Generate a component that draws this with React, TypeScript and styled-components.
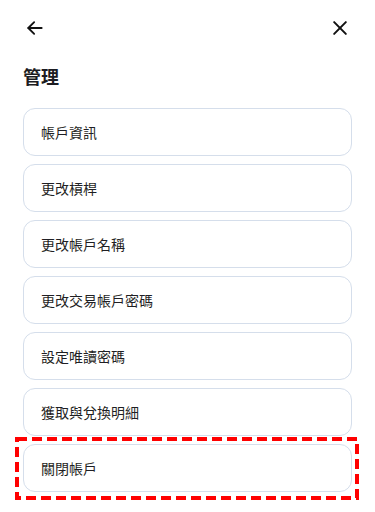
import React from "react";
import styled, { createGlobalStyle } from "styled-components";

const GlobalStyle = createGlobalStyle`
  html, body {
    margin: 0;
    padding: 0;
    background: #ffffff;
  }
  body {
    font-family: "Noto Sans", "Noto Sans CJK TC", sans-serif;
    color: #1f1f24;
  }
`;

const Page = styled.div`
  width: 375px;
  min-height: 512px;
  box-sizing: border-box;
  padding: 12px 23px 0 23px;
`;

const TopBar = styled.div`
  display: flex;
  align-items: center;
  justify-content: space-between;
  height: 32px;
`;

const IconButton = styled.button`
  display: flex;
  align-items: center;
  justify-content: center;
  width: 24px;
  height: 24px;
  padding: 0;
  border: none;
  background: none;
  color: #111;
  cursor: pointer;
`;

const Title = styled.h1`
  margin: 14px 0 0 0;
  height: 36px;
  line-height: 36px;
  font-size: 18px;
  font-weight: 700;
  color: #1c1c22;
  font-family: "Noto Sans CJK TC", sans-serif;
`;

const List = styled.div`
  display: flex;
  flex-direction: column;
  gap: 8px;
  margin-top: 14px;
`;

const ItemWrap = styled.div`
  position: relative;
`;

const Item = styled.button`
  display: flex;
  align-items: center;
  width: 100%;
  height: 48px;
  box-sizing: border-box;
  padding: 0 17px;
  background: #fff;
  border: 1px solid #d5deeb;
  border-radius: 12px;
  font-family: "Noto Sans CJK TC", sans-serif;
  font-size: 14px;
  color: #1f1f24;
  text-align: left;
  cursor: pointer;
`;

const Highlight = styled.svg`
  position: absolute;
  left: -8px;
  top: -7px;
  width: 344px;
  height: 63px;
  pointer-events: none;
`;

const items = [
  "帳戶資訊",
  "更改槓桿",
  "更改帳戶名稱",
  "更改交易帳戶密碼",
  "設定唯讀密碼",
  "獲取與兌換明細",
  "關閉帳戶",
];

export default function App() {
  return (
    <>
      <GlobalStyle />
      <Page>
        <TopBar>
          <IconButton aria-label="back">
            <svg width="20" height="20" viewBox="0 0 24 24" fill="none" stroke="currentColor" strokeWidth="2.2" strokeLinecap="round" strokeLinejoin="round">
              <path d="M20 12H4" />
              <path d="M11 5l-7 7 7 7" />
            </svg>
          </IconButton>
          <IconButton aria-label="close">
            <svg width="20" height="20" viewBox="0 0 24 24" fill="none" stroke="currentColor" strokeWidth="2.4" strokeLinecap="round">
              <path d="M5 5l14 14" />
              <path d="M19 5L5 19" />
            </svg>
          </IconButton>
        </TopBar>
        <Title>管理</Title>
        <List>
          {items.map((label, i) => (
            <ItemWrap key={label}>
              <Item>{label}</Item>
              {i === items.length - 1 && (
                <Highlight viewBox="0 0 344 63">
                  <rect
                    x="2"
                    y="2"
                    width="340"
                    height="59"
                    fill="none"
                    stroke="#ff0000"
                    strokeWidth="4"
                    strokeDasharray="10 5"
                  />
                </Highlight>
              )}
            </ItemWrap>
          ))}
        </List>
      </Page>
    </>
  );
}
